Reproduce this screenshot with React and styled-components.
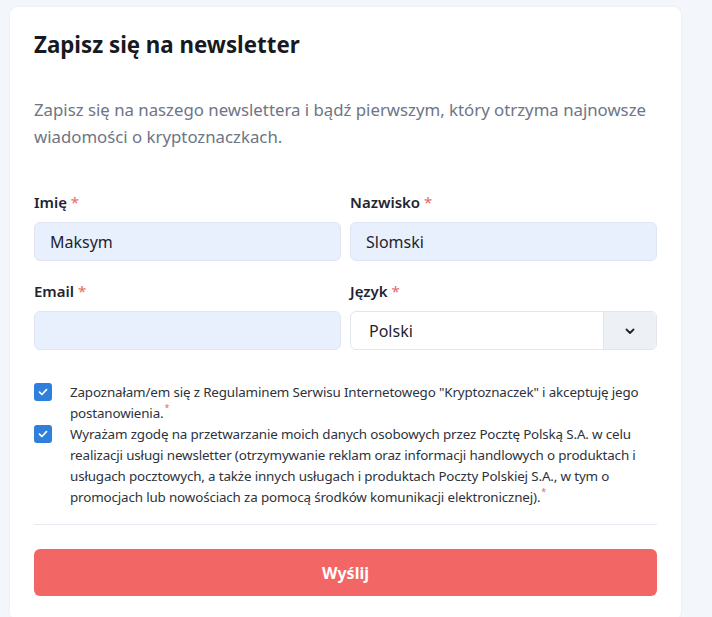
import React from 'react';
import { styled, createGlobalStyle } from 'styled-components';

const GlobalStyle = createGlobalStyle`
  * { box-sizing: border-box; }
  body {
    margin: 0;
    background: #f3f6fa;
    font-family: "Noto Sans", "Open Sans", sans-serif;
    color: #1f2430;
  }
`;

const App = () => {
  return (
    <>
      <GlobalStyle />
      <Page>
        <Card>
          <Title>Zapisz się na newsletter</Title>
          <Lead>
            Zapisz się na naszego newslettera i bądź pierwszym, który otrzyma najnowsze wiadomości o
            kryptoznaczkach.
          </Lead>
          <FieldGrid>
            <Field>
              <Label>
                Imię <Req>*</Req>
              </Label>
              <Input defaultValue="Maksym" $filled />
            </Field>
            <Field>
              <Label>
                Nazwisko <Req>*</Req>
              </Label>
              <Input defaultValue="Slomski" $filled />
            </Field>
            <Field>
              <Label>
                Email <Req>*</Req>
              </Label>
              <Input defaultValue="" $filled />
            </Field>
            <Field>
              <Label>
                Język <Req>*</Req>
              </Label>
              <SelectBox>
                <SelectValue>Polski</SelectValue>
                <SelectArrow>
                  <svg width="12" height="12" viewBox="0 0 12 12" fill="none">
                    <path d="M2.5 4.5 6 8l3.5-3.5" stroke="#1f2430" strokeWidth="1.8" strokeLinecap="round" strokeLinejoin="round" />
                  </svg>
                </SelectArrow>
              </SelectBox>
            </Field>
          </FieldGrid>
          <Consents>
            <ConsentRow>
              <Check />
              <ConsentText>
                Zapoznałam/em się z Regulaminem Serwisu Internetowego "Kryptoznaczek" i akceptuję jego
                postanowienia.<SupReq>*</SupReq>
              </ConsentText>
            </ConsentRow>
            <ConsentRow>
              <Check />
              <ConsentText>
                Wyrażam zgodę na przetwarzanie moich danych osobowych przez Pocztę Polską S.A. w celu
                realizacji usługi newsletter (otrzymywanie reklam oraz informacji handlowych o produktach i
                usługach pocztowych, a także innych usługach i produktach Poczty Polskiej S.A., w tym o
                promocjach lub nowościach za pomocą środków komunikacji elektronicznej).<SupReq>*</SupReq>
              </ConsentText>
            </ConsentRow>
          </Consents>
          <Divider />
          <SubmitButton type="button">Wyślij</SubmitButton>
        </Card>
      </Page>
    </>
  );
};

const Check = () => (
  <CheckBox>
    <svg width="12" height="12" viewBox="0 0 12 12" fill="none">
      <path d="M2.5 6.2 4.9 8.5 9.5 3.6" stroke="#fff" strokeWidth="1.7" strokeLinecap="round" strokeLinejoin="round" />
    </svg>
  </CheckBox>
);

export default App;

const Page = styled.div`
  padding: 7px 31px 0 10px;
`;

const Card = styled.section`
  background: #ffffff;
  border-radius: 8px;
  box-shadow: 0 0 3px rgba(30, 50, 80, 0.06);
  padding: 24px;
  width: 671px;
`;

const Title = styled.h1`
  margin: 0;
  font-size: 22.3px;
  line-height: 28px;
  font-weight: 700;
  color: #171a22;
`;

const Lead = styled.p`
  margin: 37px 0 0;
  font-size: 16.8px;
  line-height: 27px;
  color: #6e7585;
`;

const FieldGrid = styled.div`
  margin-top: 42px;
  display: grid;
  grid-template-columns: 1fr 1fr;
  column-gap: 9px;
  row-gap: 20px;
`;

const Field = styled.div`
  display: flex;
  flex-direction: column;
  gap: 9px;
`;

const Label = styled.label`
  font-size: 15px;
  line-height: 21px;
  font-weight: 600;
  color: #1f2430;
`;

const Req = styled.span`
  color: #e46a6a;
  font-weight: 400;
`;

const Input = styled.input`
  height: 39px;
  border: 1px solid #dfe6f1;
  border-radius: 6px;
  background: ${(props) => (props.$filled ? '#e8f0fe' : '#fff')};
  padding: 0 15px;
  font: inherit;
  font-size: 16px;
  color: #1f2430;
  outline: none;
`;

const SelectBox = styled.div`
  height: 39px;
  display: flex;
  border: 1px solid #e1e6ed;
  border-radius: 6px;
  overflow: hidden;
  background: #fff;
`;

const SelectValue = styled.div`
  flex: 1;
  display: flex;
  align-items: center;
  padding: 0 18px;
  font-size: 16px;
  color: #1f2430;
`;

const SelectArrow = styled.div`
  width: 53px;
  display: flex;
  align-items: center;
  justify-content: center;
  background: #edf1f5;
  border-left: 1px solid #e1e6ed;
`;

const Consents = styled.div`
  margin-top: 32px;
  display: flex;
  flex-direction: column;
`;

const ConsentRow = styled.div`
  display: flex;
  gap: 18px;
  align-items: flex-start;
`;

const CheckBox = styled.span`
  flex: none;
  width: 18px;
  height: 18px;
  margin-top: 1px;
  border-radius: 3px;
  background: #2f7fdc;
  display: flex;
  align-items: center;
  justify-content: center;
`;

const ConsentText = styled.p`
  margin: 0;
  font-size: 13.4px;
  letter-spacing: -0.15px;
  line-height: 21px;
  color: #2d323c;
`;

const SupReq = styled.span`
  color: #e46a6a;
  font-size: 9px;
  line-height: 0;
  margin-left: 1px;
  vertical-align: 7px;
`;

const Divider = styled.hr`
  margin: 16px 0 0;
  border: none;
  border-top: 1px solid #e6eaf0;
`;

const SubmitButton = styled.button`
  margin-top: 24px;
  width: 100%;
  height: 47px;
  border: none;
  border-radius: 6px;
  background: #f26666;
  color: #fff;
  font: inherit;
  font-size: 16px;
  font-weight: 700;
  cursor: pointer;
`;
